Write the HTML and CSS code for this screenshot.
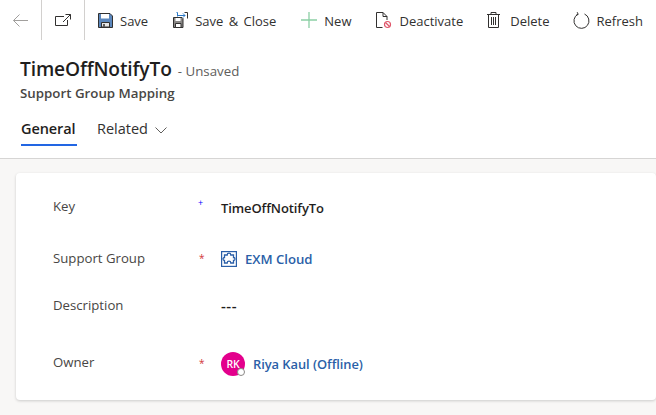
FILE: index.html
```html
<!DOCTYPE html>
<html lang="en">
<head>
<meta charset="utf-8">
<title>TimeOffNotifyTo</title>
<link rel="stylesheet" href="styles.css">
</head>
<body>
<div class="page">
  <header class="header">
    <nav class="toolbar">
      <div class="nav-cell nav-back">
        <svg width="15" height="13" viewBox="0 0 15 13"><path d="M6.500.5l-6 6 6 6M.5 6.500H15" fill="none" stroke="#a19f9d" stroke-width="1"/></svg>
      </div>
      <div class="nav-cell nav-open">
        <svg width="16" height="12" viewBox="0 0 16 12"><path d="M9 2.500H.5v9h12V6M10.500 .5h5v5M15.500 .5 8 8" fill="none" stroke="#323130" stroke-width="1"/></svg>
      </div>
      <div class="cmd cmd-save">
        <svg width="15" height="15" viewBox="0 0 15 15"><path d="M.5.5h11.500l2.500 2.500v11.500H.5z" fill="#5b87bd" stroke="#323130"/><path d="M3 1h8v4.500H3z" fill="#fff"/><path d="M3.500 9.500h8V14h-8z" fill="#e6e6e6" stroke="#323130"/><path d="M5 11h2v3H5z" fill="#605e5c"/></svg>
        <span>Save</span>
      </div>
      <div class="cmd cmd-close">
        <svg width="15" height="16" viewBox="0 0 15 16"><path d="M.5 5.500h8.500l1 1v9H.5z" fill="#8a8886" stroke="#323130"/><path d="M2.500 6h5v3h-5z" fill="#fff"/><path d="M2.500 11.500h5.500v4H2.500z" fill="#fff" stroke="#323130"/><path d="M4.500 4.500V.5h-1M5 3.500h7M10 1.500l2 2-2 2" fill="none" stroke="#2b79c7"/><path d="M11.500 .5h3v6" fill="none" stroke="#323130"/></svg>
        <span>Save &amp; Close</span>
      </div>
      <div class="cmd cmd-new">
        <svg width="16" height="16" viewBox="0 0 16 16"><path d="M8 0v16M0 8h16" stroke="#8ccfa5" stroke-width="1.300"/></svg>
        <span>New</span>
      </div>
      <div class="cmd cmd-deact">
        <svg width="16" height="17" viewBox="0 0 16 17"><path d="M6.500 15.500h-6V.5h6.500l4 4v3.500M7 .5v4h4" fill="none" stroke="#323130"/><circle cx="11.500" cy="12.500" r="3" fill="#fff" stroke="#e0566a" stroke-width="1.200"/><path d="m9.500 10.500 4 4" stroke="#e0566a" stroke-width="1.200"/></svg>
        <span>Deactivate</span>
      </div>
      <div class="cmd cmd-del">
        <svg width="13" height="16" viewBox="0 0 13 16"><path d="M0 2.500h13M4 2.500V.5h5v2M1.500 2.500v13h10v-13M4.500 5v8M6.500 5v8M8.500 5v8" fill="none" stroke="#323130"/></svg>
        <span>Delete</span>
      </div>
      <div class="cmd cmd-refresh">
        <svg width="17" height="17" viewBox="0 0 17 17"><path d="M5 2.200A7.500 7.500 0 1 0 11.500 2M4.200 .2 5.200 2.400 3 3.300" fill="none" stroke="#323130"/></svg>
        <span>Refresh</span>
      </div>
    </nav>
    <div class="title-block">
      <div class="title-row">
        <h1 class="title">TimeOffNotifyTo</h1>
        <span class="status">- Unsaved</span>
      </div>
      <div class="entity">Support Group Mapping</div>
    </div>
    <div class="tabs">
      <div class="tab tab-active">General</div>
      <div class="tab tab-related">
        <span>Related</span>
        <svg width="12" height="7" viewBox="0 0 12 7"><path d="m.5.500 5.500 5.500 5.500-5.500" fill="none" stroke="#605e5c"/></svg>
      </div>
    </div>
  </header>
  <main class="content">
    <section class="card">
      <div class="row row-key">
        <div class="label">Key</div>
        <div class="req req-plus">+</div>
        <div class="value value-strong">TimeOffNotifyTo</div>
      </div>
      <div class="row row-group">
        <div class="label">Support Group</div>
        <div class="req">*</div>
        <div class="value value-link">
          <svg class="group-icon" width="16" height="16" viewBox="0 0 16 16"><rect x=".6" y=".6" width="14.800" height="14.800" fill="#fff" stroke="#2b5fa8" stroke-width="1.200"/><path d="M3.500 4h2.700a1.800 1.800 0 0 1 3.600 0h2.700v2.500a1.500 1.500 0 0 1 0 3V12H9.800a1.800 1.800 0 0 0-3.600 0H3.500V9.500a1.500 1.500 0 0 1 0-3z" fill="#fff" stroke="#2b5fa8" stroke-width="1.300"/></svg>
          <span>EXM Cloud</span>
        </div>
      </div>
      <div class="row row-desc">
        <div class="label">Description</div>
        <div class="req"></div>
        <div class="value value-dash">---</div>
      </div>
      <div class="row row-owner">
        <div class="label">Owner</div>
        <div class="req">*</div>
        <div class="value value-link">
          <div class="avatar">RK<span class="presence"></span></div>
          <span>Riya Kaul (Offline)</span>
        </div>
      </div>
    </section>
  </main>
</div>
</body>
</html>
```
FILE: styles.css
```css
* { box-sizing: border-box; }
html, body { margin: 0; height: 100%; }
body {
  width: 656px;
  height: 415px;
  overflow: hidden;
  font-family: "Open Sans", "Noto Sans", "Liberation Sans", sans-serif;
  color: #323130;
  background: #f8f7f6;
}
.page { display: flex; flex-direction: column; height: 415px; }
.header { background: #fff; border-bottom: 1px solid #d6d5d4; height: 159px; }
.toolbar { display: flex; align-items: center; height: 40px; white-space: nowrap; }
.nav-cell {
  display: flex; align-items: center; justify-content: center;
  height: 40px; border-right: 1px solid #d2d0ce;
}
.nav-back { width: 42px; }
.nav-open { width: 43px; }
.cmd { display: flex; align-items: center; gap: 7px; font-size: 13px; line-height: 20px; }
.cmd span { padding-top: 1px; }
.cmd-save { margin-left: 13px; }
.cmd-close { margin-left: 25px; }
.cmd-close span { word-spacing: 2px; }
.cmd-new { margin-left: 25px; }
.cmd-deact { margin-left: 25px; }
.cmd-del { margin-left: 24px; gap: 10px; }
.cmd-refresh { margin-left: 24px; gap: 6px; }
.title-block { padding: 17px 20px 0; }
.title-row { display: flex; align-items: baseline; gap: 6px; }
.title { margin: 0; font-size: 19.200px; line-height: 24px; font-weight: 600; color: #1f1e1d; letter-spacing: -.15px; }
.status { font-size: 13.300px; color: #605e5c; }
.entity { font-size: 13.300px; font-weight: 600; line-height: 18px; color: #484644; margin-top: 3px; }
.tabs { display: flex; margin: 10px 0 0 21px; gap: 20px; }
.tab { height: 34px; font-size: 14.500px; line-height: 34px; }
.tab-active { font-weight: 600; color: #1f1e1d; border-bottom: 2px solid #2266e3; width: 56px; letter-spacing: -.1px; }
.tab-related { display: flex; align-items: baseline; gap: 7px; }
.content { flex: 1; padding: 14px 0 15px 16px; }
.card {
  background: #fff; height: 227px; border-radius: 4px;
  box-shadow: 0 1px 3px rgba(0, 0, 0, .18);
  padding: 22px 0 0 37px;
  font-size: 13.200px;
}
.row { display: grid; grid-template-columns: 145px 23px 1fr; align-items: center; }
.row-key { height: 22px; }
.row-key .value { padding-top: 3px; }
.row-group { height: 24px; margin-top: 29px; }
.row-group .value { padding-top: 2px; }
.row-desc { height: 22px; margin-top: 24px; }
.row-owner { height: 29px; margin-top: 33px; align-items: start; }
.row-owner .label { margin-top: 4px; }
.row-owner .req { margin-top: 9px; }
.row-owner .value { margin-top: 3px; font-size: 12.900px; }
.label { color: #484644; }
.req { color: #d13438; font-size: 10px; line-height: 10px; padding-left: 1px; }
.req-plus { color: #0000ff; font-size: 9px; line-height: 8px; padding: 0 0 6px 0; }
.value-strong { font-weight: 600; color: #1f1e1d; font-size: 13px; letter-spacing: -.1px; }
.value-dash { font-weight: 600; color: #1f1e1d; font-size: 15px; letter-spacing: .5px; }
.value-link { display: flex; align-items: center; gap: 8px; font-weight: 600; color: #2b5fa8; letter-spacing: -.05px; }
.avatar {
  position: relative; width: 24px; height: 24px; border-radius: 50%;
  background: #e3008c; color: #fff; font-size: 10.500px; font-weight: 600;
  display: flex; align-items: center; justify-content: center; letter-spacing: -.3px;
}
.presence {
  position: absolute; right: 0; bottom: 0; width: 8px; height: 8px;
  border-radius: 50%; background: #fff; border: 1.300px solid #8a8886;
}
```
